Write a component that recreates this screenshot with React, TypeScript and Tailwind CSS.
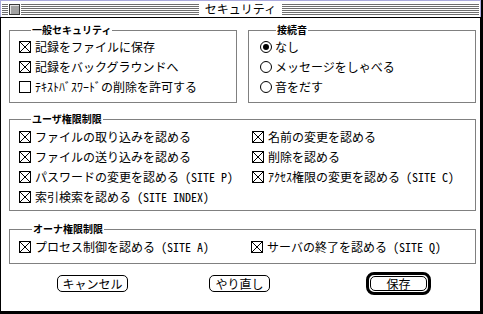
import type { ReactNode } from 'react';

function CheckBox({ on = true }: { on?: boolean }) {
  return (
    <svg width="12" height="12" viewBox="0 0 12 12" className="shrink-0">
      <rect x="0.5" y="0.5" width="11" height="11" fill="white" stroke="black" shapeRendering="crispEdges" />
      {on && <path d="M1 1L11 11M11 1L1 11" stroke="black" strokeWidth="1" />}
    </svg>
  );
}

function Radio({ on = false }: { on?: boolean }) {
  return (
    <svg width="12" height="12" viewBox="0 0 12 12" className="shrink-0">
      <circle cx="6" cy="6" r="5.5" fill="white" stroke="black" />
      {on && <circle cx="6" cy="6" r="3" fill="black" />}
    </svg>
  );
}

function Latin({ children }: { children: ReactNode }) {
  return <span className="[font-feature-settings:'hwid']">{children}</span>;
}

function Item({ children, on = true, radio = false }: { children: ReactNode; on?: boolean; radio?: boolean }) {
  return (
    <div className={`flex h-[20px] items-center ${radio ? 'gap-[3px]' : 'gap-[4px]'}`}>
      {radio ? <Radio on={on} /> : <CheckBox on={on} />}
      <span className="whitespace-nowrap">{children}</span>
    </div>
  );
}

function Group({ title, legendClass, className, children }: { title: string; legendClass: string; className: string; children: ReactNode }) {
  return (
    <fieldset className={`border border-[#808080] ${className}`}>
      <legend className={`px-[1px] text-[10px] leading-[12px] font-bold ${legendClass}`}>{title}</legend>
      {children}
    </fieldset>
  );
}

const stripes = 'h-[11px] bg-[repeating-linear-gradient(to_bottom,#6e6e6e_0_1px,transparent_1px_2px)]';

export default function App() {
  return (
    <div className="h-[314px] w-[483px] bg-white font-['Noto_Sans_CJK_JP',sans-serif] text-[12px] leading-[14px] text-black">
      <div className="flex h-full flex-col border-r-2 border-b-2 border-black">
        {/* title bar */}
        <div className="grid h-[17px] shrink-0 grid-cols-[1fr_auto_1fr] items-center border-x border-t border-[#aaaadd] px-[1px] bg-white">
          <div className="flex items-center">
            <div className={`w-[6px] ${stripes}`} />
            <div className="px-[1px]">
              <div className="h-[11px] w-[11px] border border-[#3a3a3a] bg-[#a2a2a2] shadow-[inset_1px_1px_0_#e4e4e4]" />
            </div>
            <div className={`flex-1 ${stripes}`} />
          </div>
          <span className="px-[6px] text-[12px] leading-[16px]">セキュリティ</span>
          <div className={stripes} />
        </div>

        {/* body */}
        <div className="flex flex-1 flex-col border border-black pt-[6px]">
          <div className="flex gap-[11px] pl-[8px]">
            <Group title="一般セキュリティ" legendClass="ml-[12px]" className="w-[228px] pt-[1px] pb-[5px] pl-[9px]">
              <Item>記録をファイルに保存</Item>
              <Item>記録をバックグラウンドへ</Item>
              <Item on={false}>ﾃｷｽﾄﾊﾞｽﾜｰﾄﾞの削除を許可する</Item>
            </Group>
            <Group title="接続音" legendClass="ml-[16px]" className="w-[228px] pt-[1px] pb-[5px] pl-[11px]">
              <Item radio on>なし</Item>
              <Item radio on={false}>メッセージをしゃべる</Item>
              <Item radio on={false}>音をだす</Item>
            </Group>
          </div>

          <Group title="ユーザ権限制限" legendClass="ml-[12px]" className="mt-[10px] ml-[8px] w-[467px] pt-[2px] pb-[3px] pl-[9px]">
            <div className="grid grid-cols-[233px_1fr]">
              <Item>ファイルの取り込みを認める</Item>
              <Item>名前の変更を認める</Item>
              <Item>ファイルの送り込みを認める</Item>
              <Item>削除を認める</Item>
              <Item>
                パスワードの変更を認める<Latin> (SITE P)</Latin>
              </Item>
              <Item>
                ｱｸｾｽ権限の変更を認める<Latin> (SITE C)</Latin>
              </Item>
              <Item>
                索引検索を認める<Latin> (SITE INDEX)</Latin>
              </Item>
            </div>
          </Group>

          <Group title="オーナ権限制限" legendClass="ml-[13px]" className="mt-[12px] ml-[8px] w-[467px] pt-[2px] pb-[6px] pl-[9px]">
            <div className="grid grid-cols-[232px_1fr]">
              <Item>
                プロセス制御を認める<Latin> (SITE A)</Latin>
              </Item>
              <Item>
                サーバの終了を認める<Latin> (SITE Q)</Latin>
              </Item>
            </div>
          </Group>

          <div className="mt-[8px] flex h-[23px] items-center">
            <button className="ml-[56px] flex h-[17px] w-[71px] items-center justify-center rounded-[5px] border border-black bg-white">
              キャンセル
            </button>
            <button className="ml-[81px] flex h-[17px] w-[61px] items-center justify-center rounded-[5px] border border-black bg-white">
              やり直し
            </button>
            <div className="ml-[96px] flex h-[23px] w-[65px] rounded-[8px] border-[3px] border-black p-[1px]">
              <button className="flex flex-1 items-center justify-center rounded-[5px] border border-black bg-white">
                保存
              </button>
            </div>
          </div>
        </div>
      </div>
    </div>
  );
}
